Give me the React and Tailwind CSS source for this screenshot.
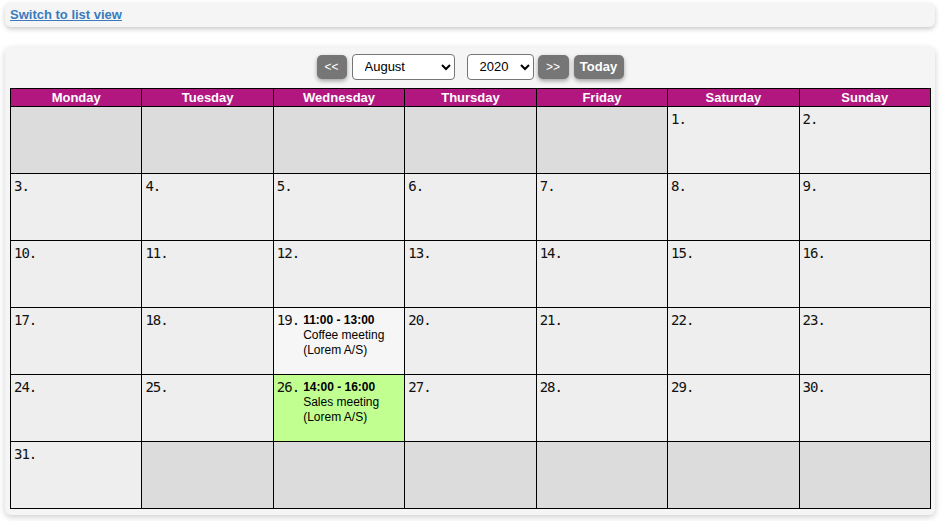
import { useState } from 'react';

const days = ['Monday', 'Tuesday', 'Wednesday', 'Thursday', 'Friday', 'Saturday', 'Sunday'];
const months = ['January', 'February', 'March', 'April', 'May', 'June', 'July', 'August', 'September', 'October', 'November', 'December'];

const events = {
  19: { time: '11:00 - 13:00', title: 'Coffee meeting', customer: 'Lorem A/S', bg: 'bg-[#f6f6f6]' },
  26: { time: '14:00 - 16:00', title: 'Sales meeting', customer: 'Lorem A/S', bg: 'bg-[#c1ff91]' },
};

// August 2020 starts on a Saturday
const buildWeeks = () => {
  const cells = [];
  for (let i = 0; i < 5; i++) cells.push(null);
  for (let d = 1; d <= 31; d++) cells.push(d);
  while (cells.length % 7) cells.push(null);
  const weeks = [];
  for (let i = 0; i < cells.length; i += 7) weeks.push(cells.slice(i, i + 7));
  return weeks;
};

const NavButton = ({ children, className = '' }) => (
  <button
    className={`h-6 rounded-[5px] bg-[#767676] text-white shadow-[0_2px_4px_rgba(0,0,0,0.35)] ${className}`}
  >
    {children}
  </button>
);

const DayCell = ({ day }) => {
  if (!day) return <td className="border border-black bg-[#dcdcdc]" />;
  const ev = events[day];
  return (
    <td className={`border border-black align-top ${ev ? ev.bg : 'bg-[#eeeeee]'}`}>
      <div className="flex h-[66px] pl-[3px] pt-[4px]">
        <span className="font-['DejaVu_Sans_Mono',monospace] text-[14px] tracking-[-1px] leading-[17px] text-[#111]">{day}.</span>
        {ev && (
          <div className="ml-[4px] pt-[1px] text-[12px] leading-[15px] text-black">
            <div className="font-bold">{ev.time}</div>
            <div>{ev.title}</div>
            <div>({ev.customer})</div>
          </div>
        )}
      </div>
    </td>
  );
};

export default function App() {
  const [month, setMonth] = useState('August');
  const [year, setYear] = useState('2020');
  const weeks = buildWeeks();

  return (
    <div className="min-h-[521px] bg-white font-['Liberation_Sans',Arial,sans-serif] pt-[3px]">
      <div className="mx-[5px] w-[930px] h-6 rounded-md bg-[#f5f5f5] shadow-[0_2px_5px_rgba(0,0,0,0.22)] px-[5px] flex items-center">
        <a href="#" className="text-[13px] font-bold text-[#3a7bbd] underline">
          Switch to list view
        </a>
      </div>

      <div className="mx-[5px] mt-5 w-[930px] rounded-md bg-[#f5f5f5] shadow-[0_2px_6px_rgba(0,0,0,0.2)] px-[5px] pt-[6px] pb-[6px]">
        <div className="flex items-center justify-center h-[27px] mb-[8px]">
          <NavButton className="w-[30px] text-[12px]">&lt;&lt;</NavButton>
          <select
            value={month}
            onChange={(e) => setMonth(e.target.value)}
            className="ml-[5px] w-[103px] h-[26px] rounded-[4px] border border-[#767676] bg-white pl-2 text-[13px] text-black"
          >
            {months.map((m) => (
              <option key={m}>{m}</option>
            ))}
          </select>
          <select
            value={year}
            onChange={(e) => setYear(e.target.value)}
            className="ml-3 w-[67px] h-[26px] rounded-[4px] border border-[#767676] bg-white pl-2 text-[13px] text-black"
          >
            {['2019', '2020', '2021'].map((y) => (
              <option key={y}>{y}</option>
            ))}
          </select>
          <NavButton className="ml-1 w-[31px] text-[12px]">&gt;&gt;</NavButton>
          <NavButton className="ml-[5px] w-[50px] font-bold text-[13px]">Today</NavButton>
        </div>

        <table className="w-[921px] table-fixed border-collapse border border-black">
          <thead>
            <tr className="bg-[#b2167f]">
              {days.map((d) => (
                <th key={d} className="border border-black h-[18px] p-0 text-[13px] leading-[16px] font-bold text-white">
                  {d}
                </th>
              ))}
            </tr>
          </thead>
          <tbody>
            {weeks.map((w, i) => (
              <tr key={i}>
                {w.map((d, j) => (
                  <DayCell key={j} day={d} />
                ))}
              </tr>
            ))}
          </tbody>
        </table>
      </div>
    </div>
  );
}
